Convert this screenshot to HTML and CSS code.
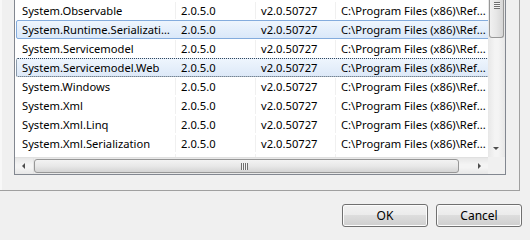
FILE: index.html
```html
<!DOCTYPE html>
<html>

<head>
  <meta charset="UTF-8">
  <title>Referências</title>
  <link rel="stylesheet" href="styles.css">
</head>

<body>
  <div class="painel">
    <div class="lista">
      <div class="linhas">
        <div class="linha">
          <div class="cel nome">System.Observable</div>
          <div class="cel versao">2.0.5.0</div>
          <div class="cel runtime">v2.0.50727</div>
          <div class="cel caminho">C:\Program Files (x86)\Ref...</div>
        </div>
        <div class="linha selecionada">
          <div class="cel nome">System.Runtime.Serialization.Json</div>
          <div class="cel versao">2.0.5.0</div>
          <div class="cel runtime">v2.0.50727</div>
          <div class="cel caminho">C:\Program Files (x86)\Ref...</div>
        </div>
        <div class="linha">
          <div class="cel nome">System.Servicemodel</div>
          <div class="cel versao">2.0.5.0</div>
          <div class="cel runtime">v2.0.50727</div>
          <div class="cel caminho">C:\Program Files (x86)\Ref...</div>
        </div>
        <div class="linha focada">
          <div class="cel nome">System.Servicemodel.Web</div>
          <div class="cel versao">2.0.5.0</div>
          <div class="cel runtime">v2.0.50727</div>
          <div class="cel caminho">C:\Program Files (x86)\Ref...</div>
        </div>
        <div class="linha">
          <div class="cel nome">System.Windows</div>
          <div class="cel versao">2.0.5.0</div>
          <div class="cel runtime">v2.0.50727</div>
          <div class="cel caminho">C:\Program Files (x86)\Ref...</div>
        </div>
        <div class="linha">
          <div class="cel nome">System.Xml</div>
          <div class="cel versao">2.0.5.0</div>
          <div class="cel runtime">v2.0.50727</div>
          <div class="cel caminho">C:\Program Files (x86)\Ref...</div>
        </div>
        <div class="linha">
          <div class="cel nome">System.Xml.Linq</div>
          <div class="cel versao">2.0.5.0</div>
          <div class="cel runtime">v2.0.50727</div>
          <div class="cel caminho">C:\Program Files (x86)\Ref...</div>
        </div>
        <div class="linha">
          <div class="cel nome">System.Xml.Serialization</div>
          <div class="cel versao">2.0.5.0</div>
          <div class="cel runtime">v2.0.50727</div>
          <div class="cel caminho">C:\Program Files (x86)\Ref...</div>
        </div>
        <div class="linha resto">
          <div class="cel nome"></div>
          <div class="cel versao"></div>
          <div class="cel runtime"></div>
          <div class="cel caminho"></div>
        </div>
      </div>

      <div class="vscroll">
        <div class="vthumb"><span class="grip-h"></span></div>
        <div class="vtrilho"></div>
        <div class="seta seta-baixo"></div>
      </div>

      <div class="hscroll">
        <div class="seta seta-esq"></div>
        <div class="hthumb"><span class="grip-v"></span></div>
        <div class="htrilho"></div>
        <div class="seta seta-dir"></div>
      </div>

      <div class="canto"></div>
    </div>
  </div>

  <div class="botoes">
    <button type="button" class="botao">OK</button>
    <button type="button" class="botao">Cancel</button>
  </div>
</body>

</html>
```

FILE: styles.css
```css
body {
  margin: 0;
  width: 530px;
  height: 240px;
  overflow: hidden;
  font-family: "Noto Sans", "Liberation Sans", sans-serif;
  font-size: 11.2px;
  color: #000;
  background-color: #f0f0f0;
}

/* painel de cima */
.painel {
  width: 520px;
  height: 191px;
  padding-left: 14px;
  box-sizing: border-box;
  border-right: 1px solid #a0a0a0;
  border-bottom: 1px solid #a0a0a0;
  box-shadow: inset 2px 0 0 #f8f8f8;
}

.lista {
  display: grid;
  grid-template-columns: 473px 17px;
  grid-template-rows: 157px 17px;
  width: 490px;
  background-color: #fff;
  border: 1px solid #828790;
  border-top: none;
}

.linhas {
  overflow: hidden;
  padding: 1px 0 0 1px;
  box-sizing: border-box;
}

.linha {
  display: flex;
  height: 19px;
  width: 600px;
  box-sizing: border-box;
  border: 1px solid transparent;
  border-radius: 2px;
}

.linha.resto {
  height: 5px;
}

.cel {
  flex: none;
  box-sizing: border-box;
  height: 17px;
  line-height: 18px;
  padding-left: 5px;
  white-space: nowrap;
  overflow: hidden;
  text-overflow: ellipsis;
  border-right: 1px solid #f0f0f0;
}

.linha.resto .cel {
  height: 3px;
}

.nome {
  width: 159px;
}

.versao,
.runtime {
  width: 80px;
}

.caminho {
  width: 250px;
  text-overflow: clip;
}

.selecionada {
  border-color: #84acdd;
  background: linear-gradient(#eef5fd, #dae8f9);
}

.focada {
  border: 1px dotted #33485e;
  background: linear-gradient(#eef5fd, #dde9f8);
}

.selecionada .cel,
.focada .cel {
  border-right-color: transparent;
}

/* barras de rolagem */
.vscroll {
  display: flex;
  flex-direction: column;
  background: linear-gradient(90deg, #e7e7e7, #f4f4f4 40%, #f4f4f4 60%, #e7e7e7);
}

.vthumb {
  height: 37px;
  margin: 0 1px;
  border: 1px solid #979797;
  border-top: none;
  border-radius: 0 0 3px 3px;
  background: linear-gradient(90deg, #f1f1f1, #e6e6e6 50%, #d6d6d6);
  position: relative;
}

.grip-h {
  position: absolute;
  left: 4px;
  top: 2px;
  width: 6px;
  height: 7px;
  background: repeating-linear-gradient(#6f6f6f 0 1px, #f4f4f4 1px 2px);
}

.vtrilho {
  flex: 1;
}

.hscroll {
  display: flex;
  align-items: stretch;
  background: linear-gradient(#e7e7e7, #f4f4f4 40%, #f4f4f4 60%, #e7e7e7);
  border-top: 1px solid #e0e0e0;
}

.hthumb {
  width: 423px;
  margin: 1px 0;
  border: 1px solid #979797;
  border-radius: 3px;
  background: linear-gradient(#f3f3f3, #e8e8e8 50%, #d4d4d4);
  position: relative;
}

.grip-v {
  position: absolute;
  left: 206px;
  top: 3px;
  width: 7px;
  height: 7px;
  background: repeating-linear-gradient(90deg, #6f6f6f 0 1px, #f4f4f4 1px 2px);
}

.htrilho {
  flex: 1;
}

.seta {
  width: 17px;
  flex: none;
  position: relative;
}

.seta::after {
  content: '';
  position: absolute;
  width: 0;
  height: 0;
}

.seta-esq {
  width: 18px;
  border-right: 1px solid #e3e3e3;
}

.seta-esq::after {
  left: 7px;
  top: 5px;
  border-top: 3px solid transparent;
  border-bottom: 3px solid transparent;
  border-right: 3px solid #4e4e4e;
}

.seta-dir::after {
  left: 7px;
  top: 5px;
  border-top: 3px solid transparent;
  border-bottom: 3px solid transparent;
  border-left: 3px solid #4e4e4e;
}

.seta-baixo {
  height: 17px;
}

.seta-baixo::after {
  left: 5px;
  top: 7px;
  border-left: 3px solid transparent;
  border-right: 3px solid transparent;
  border-top: 3px solid #4e4e4e;
}

.canto {
  background-color: #f0f0f0;
}

/* botões */
.botoes {
  display: flex;
  justify-content: flex-end;
  gap: 8px;
  padding: 13px 8px 0 0;
}

.botao {
  width: 86px;
  height: 23px;
  padding: 0;
  font-family: inherit;
  font-size: 12px;
  color: #000;
  border: 1px solid #707070;
  border-radius: 3px;
  background: linear-gradient(#f2f2f2, #ebebeb 50%, #dddddd 50%, #cfcfcf);
  box-shadow: inset 0 0 0 1px #fcfcfc;
}
```
